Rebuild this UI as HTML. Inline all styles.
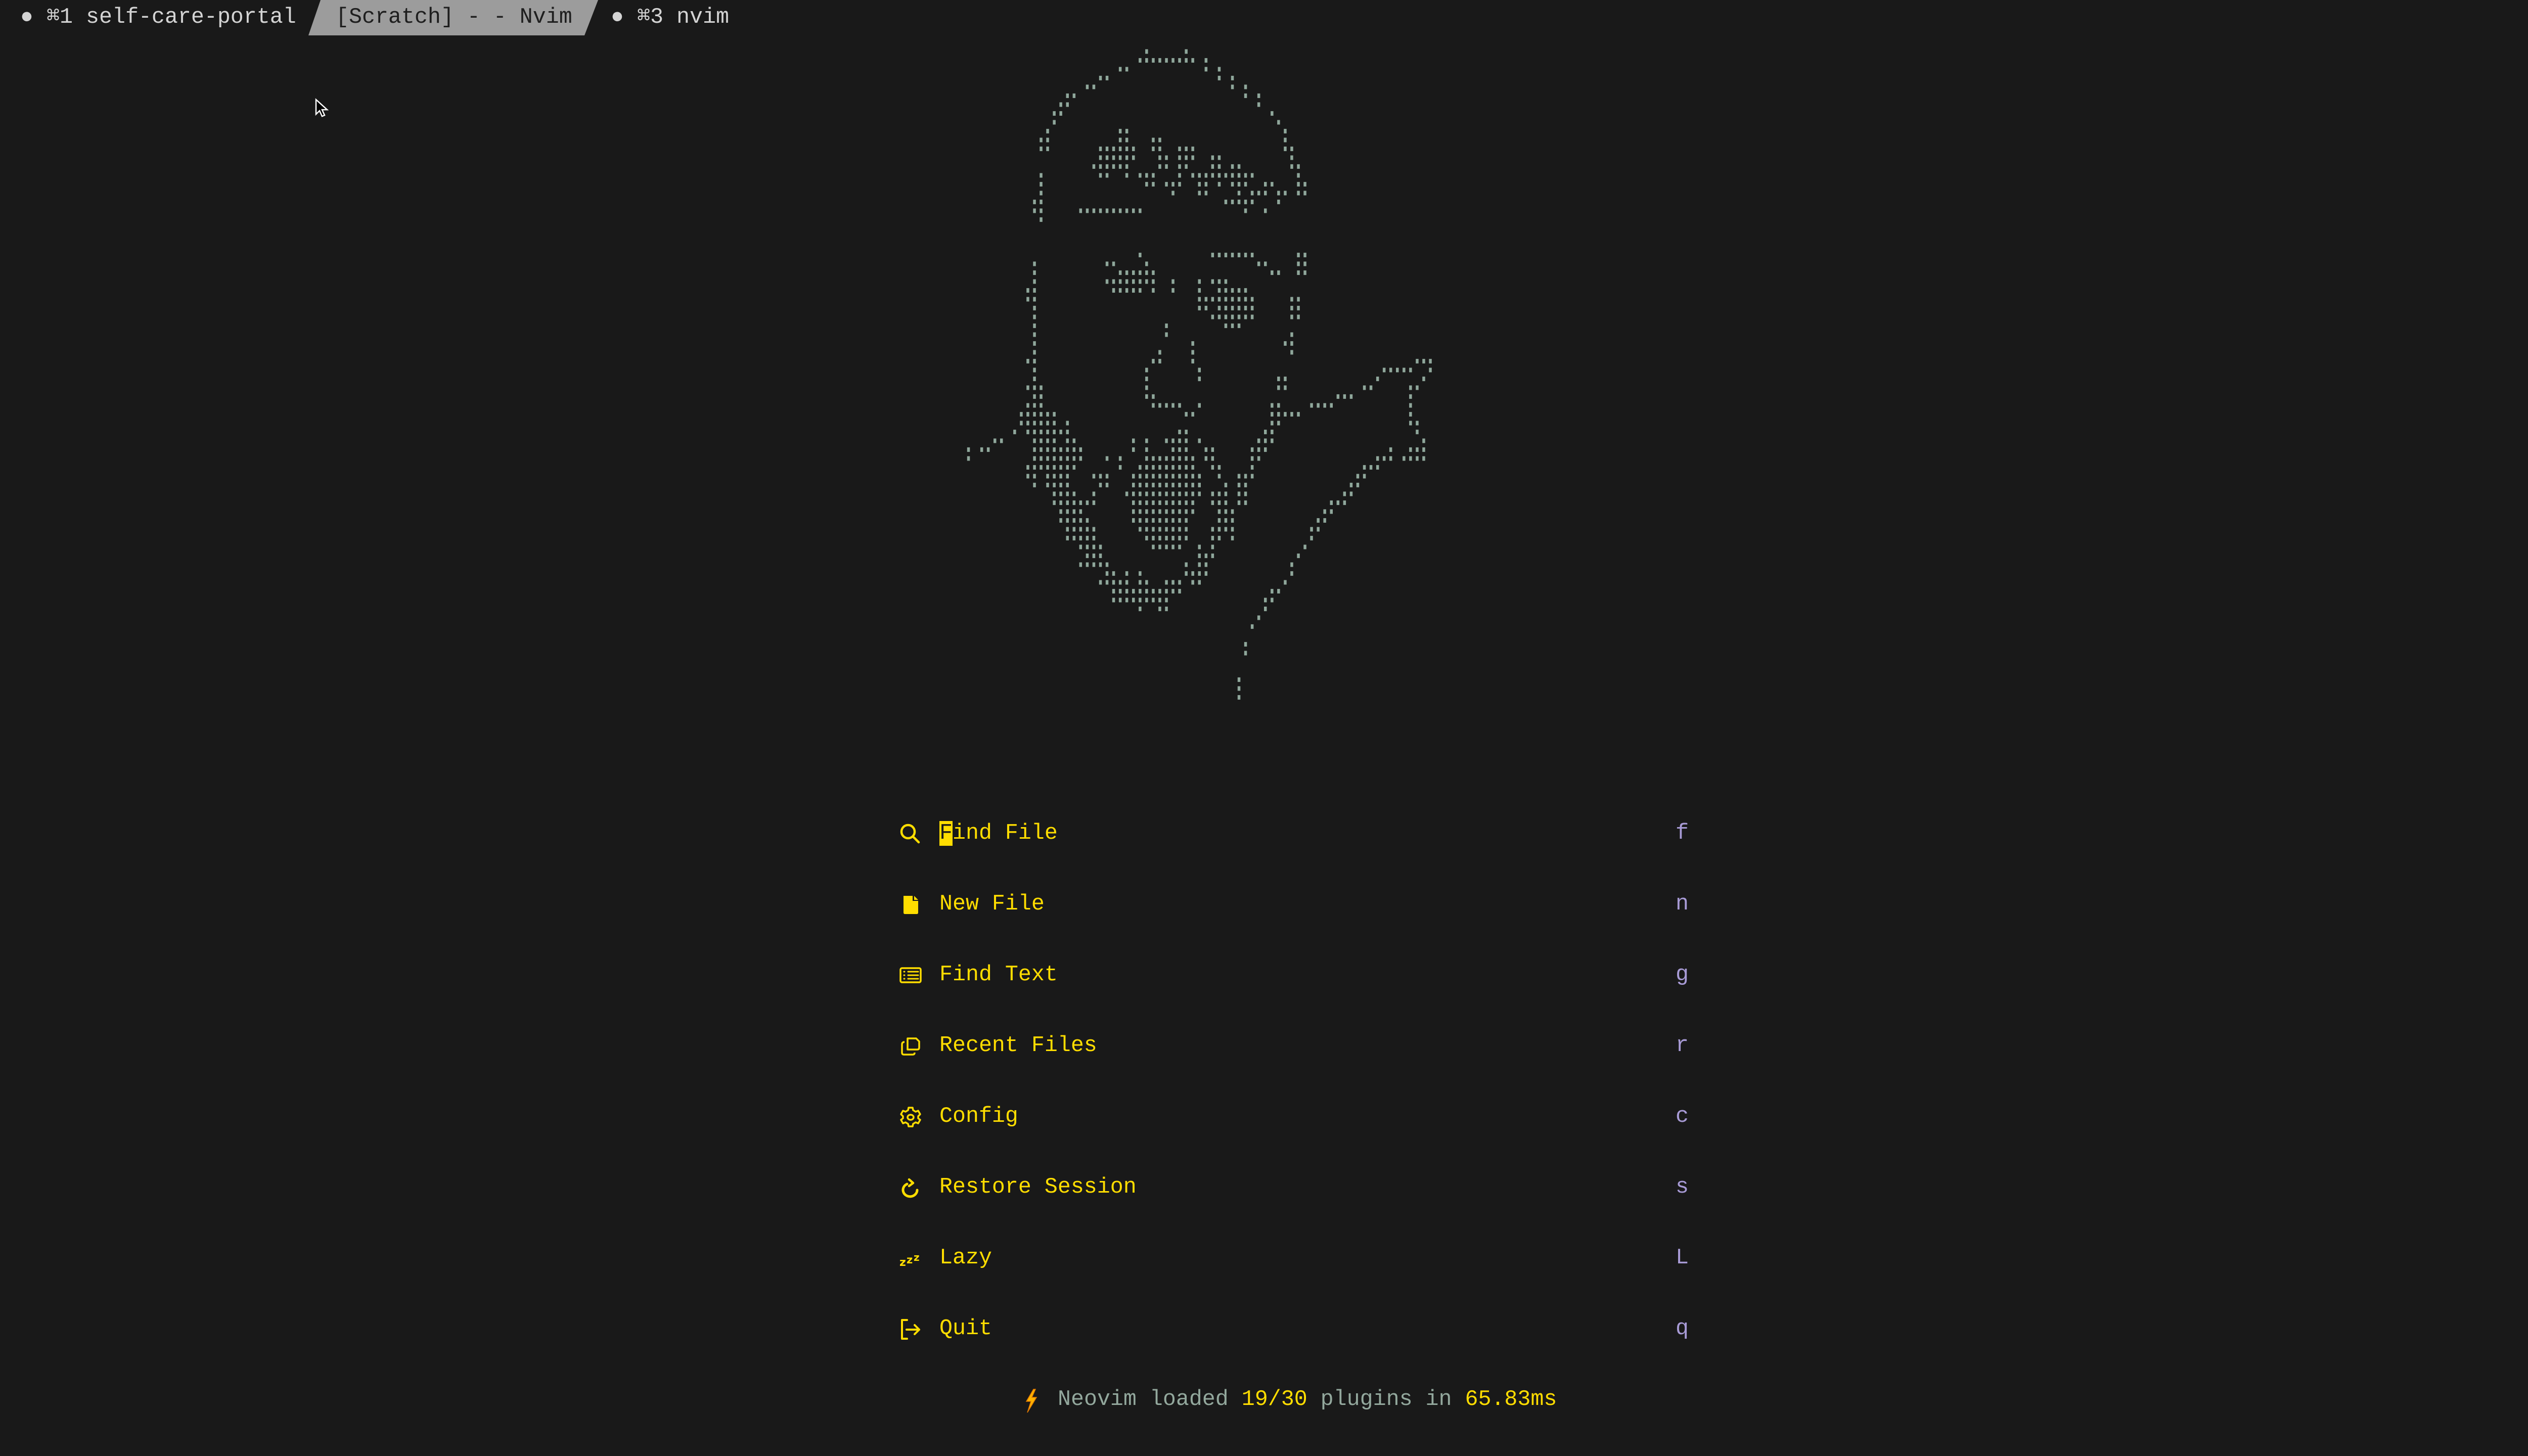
<!DOCTYPE html>
<html><head><meta charset="utf-8">
<style>
html,body{margin:0;padding:0;background:#191919;width:5120px;height:2880px;overflow:hidden}
body{position:relative;font-family:"Liberation Mono","DejaVu Sans Mono",monospace;font-size:43.3px}
.t{position:absolute;white-space:pre;line-height:70px;height:70px}
.tab{color:#d4d4d4;top:0}
.y{color:#ffdd00}
.g{color:#93a89d}
.k{color:#a89bd6}
.ic{position:absolute;left:1778px;width:46px;height:46px}
</style></head><body>
<svg width="5120" height="70" style="position:absolute;left:0;top:0"><polygon points="634,0 1183,0 1156,70 610,70" fill="#9c9c9c"/></svg>
<div class="t tab" style="left:40px">● ⌘1 self-care-portal</div>
<div class="t tab" style="left:664px;color:#1e1e1e">[Scratch] - - Nvim</div>
<div class="t tab" style="left:1208px">● ⌘3 nvim</div>

<svg style="position:absolute;left:622px;top:194px" width="30" height="42" viewBox="0 0 30 42"><path d="M3 3 L3 32 L10 25 L15 36 L20 34 L15 23 L25 23 Z" fill="#000" stroke="#fff" stroke-width="2.5"/></svg>

<svg id="art" width="5120" height="1450" style="position:absolute;left:0;top:0"></svg>

<div class="t y" style="left:1858px;top:1614px"><span style="background:#ffdd00;color:#191919">F</span>ind File</div>
<div class="t y" style="left:1858px;top:1754px">New File</div>
<div class="t y" style="left:1858px;top:1894px">Find Text</div>
<div class="t y" style="left:1858px;top:2034px">Recent Files</div>
<div class="t y" style="left:1858px;top:2174px">Config</div>
<div class="t y" style="left:1858px;top:2314px">Restore Session</div>
<div class="t y" style="left:1858px;top:2454px">Lazy</div>
<div class="t y" style="left:1858px;top:2594px">Quit</div>
<div class="t k" style="left:3314px;top:1614px">f</div>
<div class="t k" style="left:3314px;top:1754px">n</div>
<div class="t k" style="left:3314px;top:1894px">g</div>
<div class="t k" style="left:3314px;top:2034px">r</div>
<div class="t k" style="left:3314px;top:2174px">c</div>
<div class="t k" style="left:3314px;top:2314px">s</div>
<div class="t k" style="left:3314px;top:2454px">L</div>
<div class="t k" style="left:3314px;top:2594px">q</div>

<svg class="ic" style="top:1626px" viewBox="0 0 46 46" fill="none" stroke="#ffdd00" stroke-width="4.5" stroke-linecap="round"><circle cx="18" cy="19" r="13"/><line x1="28" y1="29" x2="39" y2="40"/></svg>
<svg class="ic" style="top:1766px" viewBox="0 0 46 46"><path d="M9 6 H27 V16 H38 V39 Q38 42 35 42 H12 Q9 42 9 39 Z M30 6 L38 14 H30 Z" fill="#ffdd00"/></svg>
<svg class="ic" style="top:1906px" viewBox="0 0 46 46" fill="none" stroke="#ffdd00" stroke-width="3.5"><rect x="3" y="9" width="40" height="28" rx="3"/><g stroke-width="3" stroke-linecap="round"><line x1="18" y1="16" x2="38" y2="16"/><line x1="18" y1="23" x2="38" y2="23"/><line x1="18" y1="30" x2="38" y2="30"/><line x1="10" y1="16" x2="11" y2="16"/><line x1="10" y1="23" x2="11" y2="23"/><line x1="10" y1="30" x2="11" y2="30"/></g></svg>
<svg class="ic" style="top:2046px" viewBox="0 0 46 46" fill="none" stroke="#ffdd00" stroke-width="3.5" stroke-linejoin="round"><path d="M17 8 H34 L40 14 V26 Q40 30 36 30 H17 Z"/><path d="M11 15 Q6 15 6 20 V36 Q6 40 10 40 H27 Q31 40 31 36"/></svg>
<svg class="ic" style="top:2186px" viewBox="0 0 46 46" fill="none" stroke="#ffdd00" stroke-width="3.5" stroke-linejoin="round"><path d="M19 5 H27 L28 10 L33 13 L38 11 L42 18 L38 22 V26 L42 29 L38 36 L33 34 L28 37 L27 42 H19 L18 37 L13 34 L8 36 L4 29 L8 26 V22 L4 18 L8 11 L13 13 L18 10 Z"/><ellipse cx="23" cy="24" rx="6" ry="5"/></svg>
<svg class="ic" style="top:2326px" viewBox="0 0 46 46" fill="none" stroke="#ffdd00" stroke-width="5" stroke-linecap="round"><path d="M36 28 A14 13 0 1 1 16 16"/><path d="M20 7 L28 14 L20 20" stroke-width="4.5" stroke-linejoin="round"/></svg>
<svg class="ic" style="top:2466px" viewBox="0 0 46 46"><text x="1" y="38" font-family="DejaVu Sans" font-weight="bold" font-size="22" fill="#ffdd00">z</text><text x="15" y="33" font-family="DejaVu Sans" font-weight="bold" font-size="21" fill="#ffdd00">z</text><text x="29" y="28" font-family="DejaVu Sans" font-weight="bold" font-size="20" fill="#ffdd00">z</text></svg>
<svg class="ic" style="top:2606px" viewBox="0 0 46 46" fill="none" stroke="#ffdd00" stroke-width="4" stroke-linecap="round" stroke-linejoin="round"><path d="M16 5 H6 V42 H16"/><path d="M15 24 H40 M31 15 L40 24 L31 33"/></svg>

<svg style="position:absolute;left:2022px;top:2746px" width="34" height="50" viewBox="0 0 34 50"><path d="M22 2 L8 26 H17 L10 48 L28 18 H19 L26 2 Z" fill="#ffb400" stroke="#e07800" stroke-width="1.5"/></svg>
<div class="t g" style="left:2092px;top:2734px">Neovim loaded <span class="y">19/30</span> plugins in <span class="y">65.83ms</span></div>

<script>
var D={0:"18,24",1:"17-25,27",2:"14,15,27,29",3:"11,12,29,31",4:"9,10,31,33",5:"6,7,33,35",6:"5,6,35",7:"4,5,37",8:"4,38",9:"3,14,15,39",
10:"2,3,14,15,19,20,39",11:"2,3,11-16,19,20,23-25,39,40",12:"11-16,20,21,23-25,28,29,40",13:"10-15,20,21,23,24,28,29,31,32,40,41",
14:"2,11,12,15,17-19,23,25-34,41",15:"2,18,19,21-23,26,27,29,31-33,36,37,41,42",16:"2,22,26,27,32,34-36,38,39,41,42",
17:"1,2,30-34,38",18:"1,2,8-17,33,36",19:"2",23:"17,28-34,41,42",24:"1,12,13,18,35,36,41,42",25:"1,14-19,37,38,41,42",
26:"1,12-19,22,26,28-30",27:"0,1,13-17,19,22,26,29-33",28:"0,1,26-34,40,41",29:"1,26,27,29-34,40,41",30:"1,28-34,40,41",
31:"1,21,30-32",32:"1,21,40",33:"1,25,39,40",34:"1,20,25,40",35:"0,1,19,20,25,59-61",36:"1,18,26,54-58,61",
37:"1,18,26,38,39,53,60",38:"0-2,18,38,39,51,52,58,59",39:"1,2,18,19,47-49,58",40:"0-2,19-23,26,37,38,43-46,58",
41:"-1-4,24,25,37-41,58",42:"-1-4,6,37,38,58,59",43:"-2,0-6,23,24,36,37,59",44:"-5,-4,1-4,6,7,16,18,21-24,26,35-37,60",
45:"-9,-7,-6,1-8,16,18,22-24,27,28,34-36,55,58-60",46:"-9,1-8,12,14,18-25,27,28,34,35,53-55,57-60",
47:"0-7,14,17-25,28,29,34,51-53",48:"0,1,3-6,10-12,16-26,29,32-34,50,51",49:"1,3-6,11,12,16-26,30,32,33,49,50",
50:"4-7,10,15-26,28-30,32,33,48,49",51:"4-10,16-25,28-30,32,33,46-48",52:"5-8,16-25,29-31,45,46",53:"5-9,16-24,29-31,44,45",
54:"6-10,17-24,28-31,43,44",55:"6-10,18-24,28,29,31,43",56:"8-11,19-23,26,28,42",57:"9-11,26-28,41",58:"8-12,24,26,27,40",
59:"12,13,15,17,24-27,40",60:"11-15,17,18,21-23,25,26,39",61:"13-23,37,38",62:"13-21,36,37",63:"17,20,21,36",64:"35",65:"34",
67:"33",68:"33",71:"32",72:"32",73:"32"};
var s="";
for(var r in D){var y=101.4+r*17.5;var parts=D[r].split(",");
parts.forEach(function(p){var a,b,m=p.match(/^(-?\d+)-(-?\d+)$/);if(m){a=+m[1];b=+m[2];}else{a=b=+p;}
for(var c=a;c<=b;c++){var x=2032.7+c*13.05;s+='<rect x="'+(x-2.5).toFixed(1)+'" y="'+(y-4).toFixed(1)+'" width="5.5" height="9" fill="#8fa79b"/>';}});}
document.getElementById("art").innerHTML=s;
</script>
</body></html>
